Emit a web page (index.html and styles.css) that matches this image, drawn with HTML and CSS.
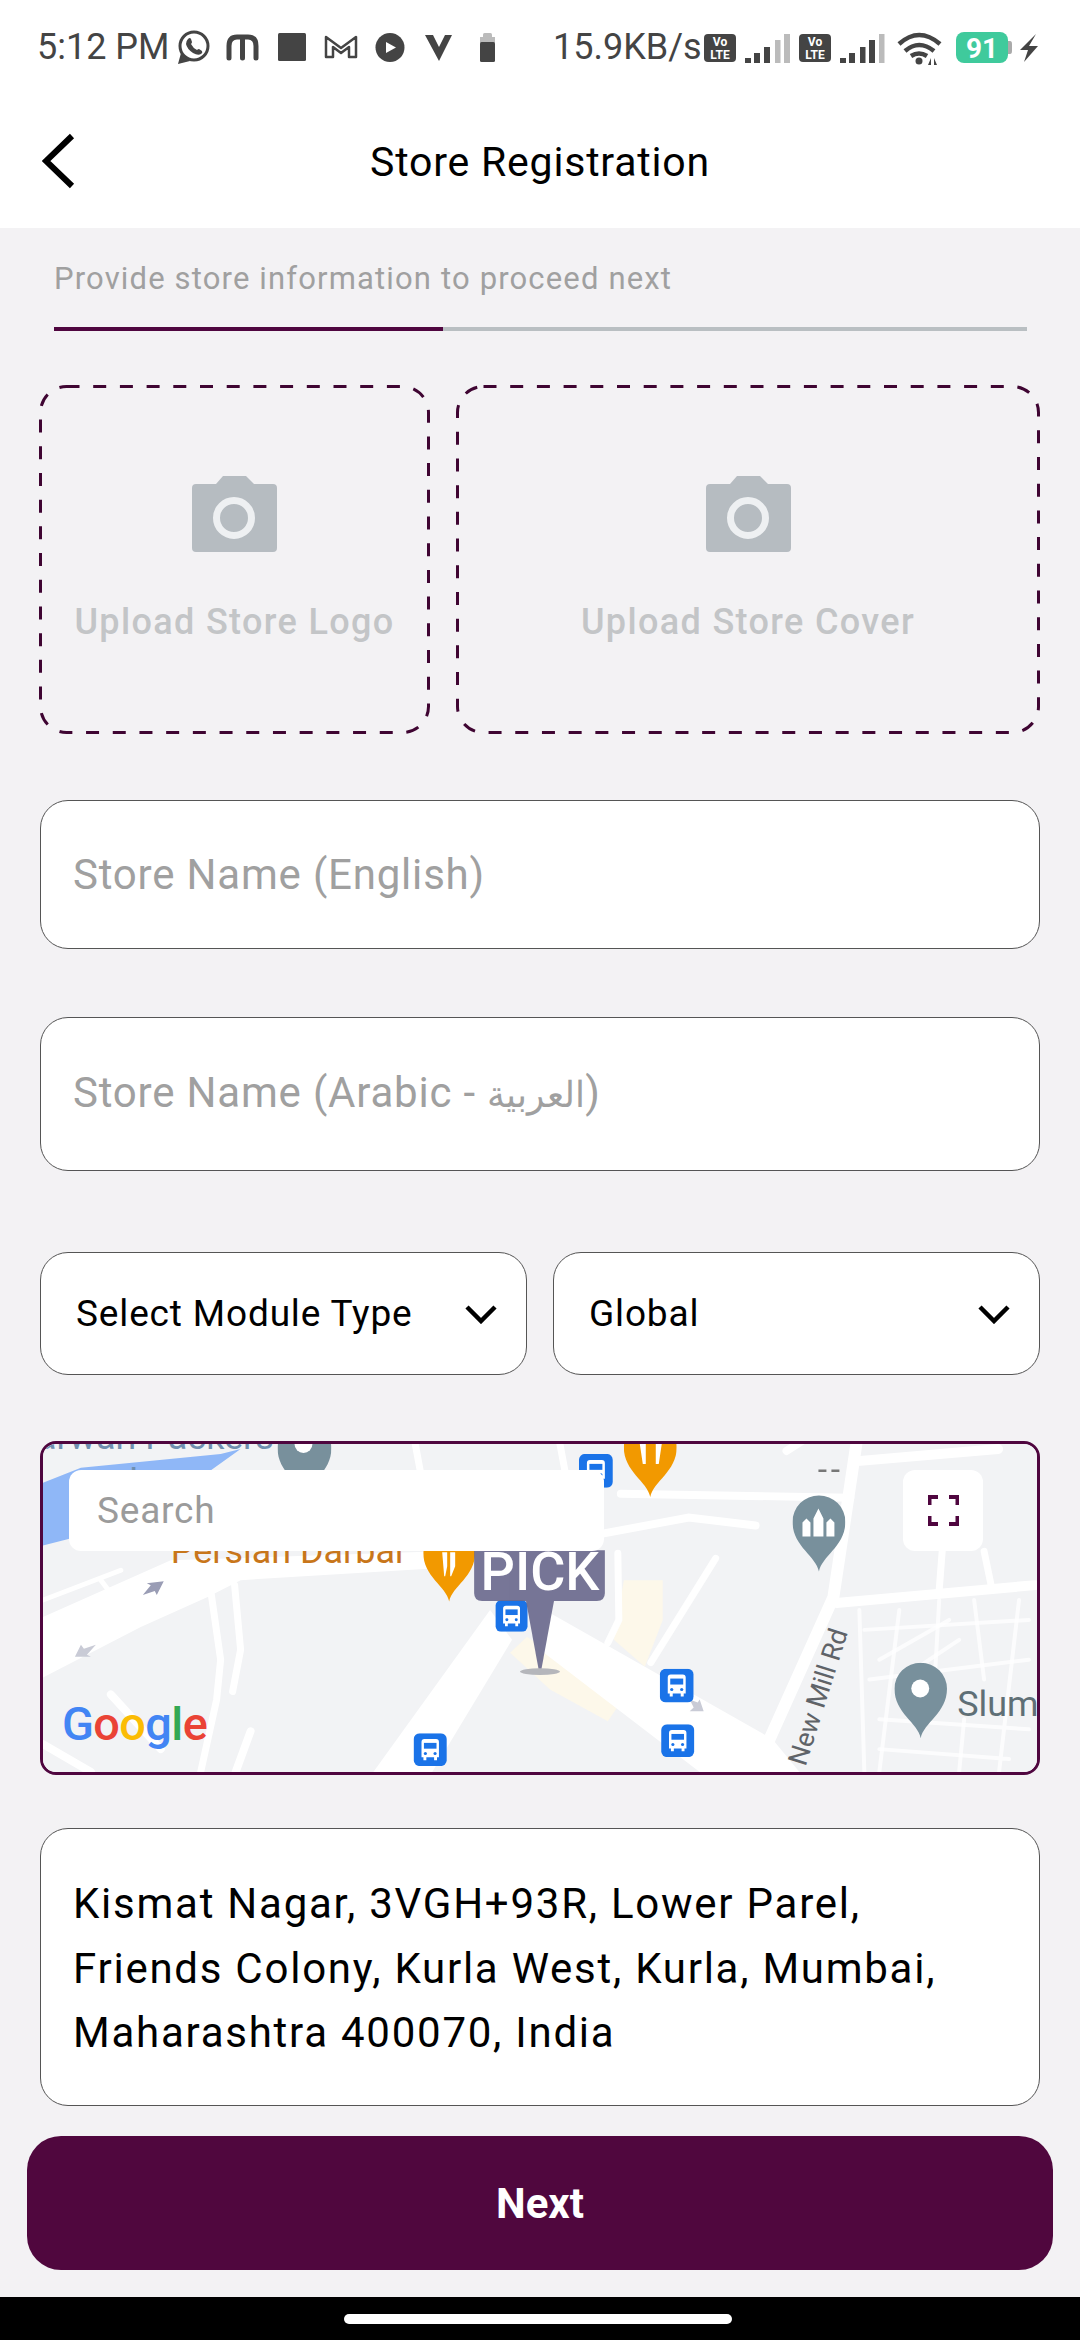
FILE: index.html
```html
<!DOCTYPE html>
<html lang="en">
<head>
    <meta charset="UTF-8">
    <meta name="viewport" content="width=device-width, initial-scale=1.0">
    <title>Store Registration</title>
    <link rel="stylesheet" href="styles.css">
</head>
<body>
    <svg class="defs" width="0" height="0">
        <symbol id="pin" viewBox="0 0 54 78">
            <path d="M27 78C24 62 0 52 0 27A27 27 0 0 1 54 27C54 52 30 62 27 78Z"/>
        </symbol>
        <symbol id="bus" viewBox="0 0 34 34">
            <rect width="34" height="34" rx="6" fill="#1a73e8"/>
            <path d="M8 9q0-3 3-3h12q3 0 3 3v16h-2v3h-3v-3h-8v3h-3v-3H8z" fill="#fff"/>
            <rect x="10.500" y="10" width="13" height="6" fill="#1a73e8"/>
            <circle cx="12" cy="21" r="1.600" fill="#1a73e8"/>
            <circle cx="22" cy="21" r="1.600" fill="#1a73e8"/>
        </symbol>
        <symbol id="camera" viewBox="0 0 85 76">
            <path d="M4 8H24L31 0H54L62 8H81Q85 8 85 12V72Q85 76 81 76H4Q0 76 0 72V12Q0 8 4 8Z" fill="#b6bcc1"/>
            <circle cx="42" cy="42" r="17.500" fill="none" stroke="#eef0f2" stroke-width="7"/>
        </symbol>
        <symbol id="chevron" viewBox="0 0 32 20">
            <path d="M2 3L16 17L30 3" fill="none" stroke="#000" stroke-width="4.500"/>
        </symbol>
    </svg>

    <div class="statusbar">
        <span class="time">5:12 PM</span>
        <svg class="status_left" viewBox="178 28 320 40">
            <circle cx="194" cy="45" r="14" fill="none" stroke="#444" stroke-width="3"/>
            <path d="M181 52L178 63L190 60Z" fill="#444"/>
            <path d="M188 38q2-2 3 0l1 3q0 1-1 2q2 4 6 6q1-1 2-1l3 2q1 2-1 3q-3 2-8-1q-6-4-7-9q0-3 2-5z" fill="#444"/>
            <path d="M229 57V45Q229 36 237 36H248Q256 36 256 45V57M242.500 38V57" fill="none" stroke="#444" stroke-width="5" stroke-linecap="round"/>
            <rect x="278" y="32" width="28" height="28" rx="1.500" fill="#444"/>
            <path d="M326 56V36L341 47L356 36V56H349V46L341 52L333 46V56Z" fill="none" stroke="#444" stroke-width="2.500" stroke-linejoin="round"/>
            <circle cx="390" cy="46.500" r="14.500" fill="#444"/>
            <path d="M386 41L396 46.500L386 52Z" fill="#fff"/>
            <path d="M425 34H433L439 46L445 34H452L439 60Z" fill="#444"/>
            <rect x="483" y="32" width="9" height="8" rx="1.500" fill="#bbb"/>
            <rect x="480" y="36" width="15" height="6" fill="#bbb"/>
            <rect x="480" y="41" width="15" height="20" rx="1.500" fill="#444"/>
        </svg>
        <span class="speed">15.9KB/s</span>
        <svg class="status_right" viewBox="704 28 336 40">
            <rect x="704" y="33" width="32" height="28" rx="4" fill="#444"/>
            <text x="720" y="45" class="volte">Vo</text>
            <text x="720" y="58" class="volte">LTE</text>
            <path d="M745 57h6v5h-6zM754 52h6v10h-6zM764 46h6v16h-6z" fill="#444"/>
            <path d="M775 39h5.500v23H775zM784 33h6v29h-6z" fill="#bbb"/>
            <rect x="799" y="33" width="32" height="28" rx="4" fill="#444"/>
            <text x="815" y="45" class="volte">Vo</text>
            <text x="815" y="58" class="volte">LTE</text>
            <path d="M840 57h6v5h-6zM849 52h6v10h-6zM860 46h5.500v16H860zM869 39h6v23h-6z" fill="#444"/>
            <path d="M879 33h5.500v29H879z" fill="#bbb"/>
            <path d="M899 43Q919 25 940 43M905 50Q919 38 934 50M911 55Q919 50 927 55" fill="none" stroke="#444" stroke-width="4.500"/>
            <circle cx="919" cy="60" r="3.500" fill="#444"/>
            <path d="M931 57v7h-3zM934 57v7h3z" fill="#444"/>
            <rect x="956" y="31" width="52" height="31" rx="8" fill="#3fca9c"/>
            <path d="M1008 40h2q2 0 2 3v7q0 3-2 3h-2z" fill="#aaa"/>
            <text x="982" y="57" class="batt">91</text>
            <path d="M1036 33L1029 45H1038L1024 61L1028 49H1020Z" fill="#444"/>
        </svg>
    </div>

    <header class="appbar">
        <svg class="back" viewBox="0 0 34 56">
            <path d="M30 3L4 28L30 53" fill="none" stroke="#000" stroke-width="6"/>
        </svg>
        <h1>Store Registration</h1>
    </header>

    <main class="form_cnt">
        <p class="hint">Provide store information to proceed next</p>
        <div class="progress"><div class="progress_fill"></div></div>

        <div class="upload_row">
            <div class="upload_box upload_logo">
                <svg class="dash"><rect x="1.500" y="1.500" rx="26"/></svg>
                <svg class="cam"><use href="#camera"/></svg>
                <span>Upload Store Logo</span>
            </div>
            <div class="upload_box upload_cover">
                <svg class="dash"><rect x="1.500" y="1.500" rx="26"/></svg>
                <svg class="cam"><use href="#camera"/></svg>
                <span>Upload Store Cover</span>
            </div>
        </div>

        <div class="field field_en">Store Name (English)</div>
        <div class="field field_ar"><span>Store Name (Arabic - <span class="ar">العربية</span>)</span></div>

        <div class="select_row">
            <div class="select">Select Module Type<svg class="chev"><use href="#chevron"/></svg></div>
            <div class="select">Global<svg class="chev"><use href="#chevron"/></svg></div>
        </div>

        <div class="map_box">
            <svg class="map" viewBox="42 1443 996 330" preserveAspectRatio="none">
                <rect x="42" y="1443" width="996" height="330" fill="#f2f3f5"/>
                <!-- blue area top left -->
                <path d="M42 1482L80 1467L220 1453L240 1448L140 1520L42 1545Z" fill="#8fb7f7"/>
                <!-- buildings -->
                <g fill="#fdf8ea">
                    <path d="M624 1580H663V1620L645 1667L614 1640Z"/>
                    <path d="M510 1653L527 1637L560 1660L618 1707L608 1722L550 1690Z"/>
                </g>
                <!-- wide roads -->
                <g fill="#fff">
                    <path d="M42 1617L170 1560L470 1550V1566L240 1580L207 1597L140 1627L42 1678Z"/>
                    <path d="M373 1773L490 1610L512 1640L432 1773Z"/>
                    <path d="M550 1613L773 1740L800 1773H700L540 1650Z"/>
                </g>
                <!-- small roads -->
                <g fill="none" stroke="#fff" stroke-linecap="round">
                    <path d="M857 1443L834 1597L770 1740L745 1773" stroke-width="12"/>
                    <path d="M861 1460L999 1448" stroke-width="10"/>
                    <path d="M837 1603L1036 1585" stroke-width="10"/>
                    <path d="M621 1493L851 1497" stroke-width="8"/>
                    <path d="M604 1533L689 1517L756 1525" stroke-width="8"/>
                    <path d="M618 1553L619 1620L608 1643" stroke-width="7"/>
                    <path d="M716 1558L651 1663" stroke-width="7"/>
                    <path d="M787 1450L815 1432" stroke-width="8"/>
                    <path d="M943 1551L940 1590M985 1551L992 1585" stroke-width="7"/>
                    <path d="M210 1590L220 1660L216 1700L200 1773" stroke-width="7"/>
                    <path d="M234 1585L240 1650L232 1692" stroke-width="7"/>
                    <path d="M110 1695L160 1750" stroke-width="8"/>
                    <path d="M250 1732L235 1773" stroke-width="8"/>
                    <path d="M42 1745L90 1773" stroke-width="8"/>
                    <path d="M42 1600L120 1570" stroke-width="5"/>
                    <path d="M100 1580L112 1596" stroke-width="5"/>
                    <path d="M415 1443L420 1470M560 1443L565 1470" stroke-width="7"/>
                    <g stroke-width="4" stroke-opacity=".75">
                        <path d="M860 1610L865 1773M865 1630L1030 1620M870 1680L1030 1660"/>
                        <path d="M900 1610L880 1773M940 1600L935 1690M975 1600L985 1680"/>
                        <path d="M1020 1600L1000 1773M880 1720L1030 1730M880 1750L1010 1760"/>
                        <path d="M880 1660L950 1620M900 1680L960 1640M965 1720L960 1773"/>
                    </g>
                </g>
                <!-- arrows -->
                <path d="M142 1595L150 1585L146 1583L163 1581L156 1595L154 1591Z" fill="#9a9db5"/>
                <path d="M95 1645L86 1655L90 1657L74 1657L80 1645L83 1649Z" fill="#c9cbd6"/>
                <path d="M690 1700L698 1703L700 1700L704 1712H690L694 1708Z" fill="#c9cbd6"/>
                <!-- labels -->
                <text x="36" y="1448" class="map_label label_blue">arwari Packers</text>
                <text x="128" y="1491" class="map_label label_blue">Inn</text>
                <text x="170" y="1563" class="map_label label_orange">Persian Darbar</text>
                <text x="958" y="1717" class="map_label label_grey">Slum</text>
                <text transform="translate(806 1768) rotate(-72.600)" class="road_label">New Mill Rd</text>
                <path d="M819 1470h8M832 1470h8" stroke="#777" stroke-width="2.500"/>
                <!-- pins -->
                <use href="#pin" x="277" y="1420" width="54" height="78" fill="#78909c"/>
                <circle cx="303" cy="1443" r="9" fill="#fff"/>
                <use href="#pin" x="423" y="1525" width="52" height="78" fill="#f29900"/>
                <use href="#pin" x="624" y="1419" width="53" height="78" fill="#f29900"/>
                <path d="M442 1552h5v14l-2 10h-1zM455 1552h-5v24h1l4-10zM640 1443h6v20h-3zM662 1443h-6v20h3z" fill="#fff"/>
                <use href="#pin" x="793" y="1494" width="53" height="78" fill="#78909c"/>
                <path d="M803 1536V1522L807 1518L811 1522V1536ZM814 1536V1518L819 1508L824 1518V1536ZM827 1536V1522L831 1518L835 1522V1536Z" fill="#fff"/>
                <use href="#pin" x="895" y="1663" width="53" height="76" fill="#78909c"/>
                <circle cx="921" cy="1689" r="9" fill="#fff"/>
                <!-- bus stops -->
                <use href="#bus" x="495" y="1600" width="33" height="32"/>
                <use href="#bus" x="413" y="1734" width="34" height="33"/>
                <use href="#bus" x="579" y="1453" width="34" height="34"/>
                <use href="#bus" x="660" y="1669" width="34" height="34"/>
                <use href="#bus" x="661" y="1725" width="34" height="33"/>
                <!-- pick marker -->
                <g opacity=".92">
                    <path d="M474 1550H605V1593Q605 1601 597 1601H482Q474 1601 474 1593Z" fill="#6c6b8e"/>
                    <path d="M526 1601H554L541 1672H539Z" fill="#6c6b8e"/>
                </g>
                <ellipse cx="540" cy="1672" rx="20" ry="3.500" fill="#b5b6bb"/>
                <text x="540" y="1590" class="pick">PICK</text>
                <!-- google logo -->
                <text x="61" y="1741" class="google"><tspan fill="#4285f4">G</tspan><tspan fill="#ea4335">o</tspan><tspan fill="#fbbc05">o</tspan><tspan fill="#4285f4">g</tspan><tspan fill="#34a853">l</tspan><tspan fill="#ea4335">e</tspan></text>
            </svg>
            <div class="map_search">Search</div>
            <div class="map_full">
                <svg viewBox="0 0 31 31">
                    <path d="M1.500 10V2H10M21 2H29.500V10M29.500 21V29H21M10 29H1.500V21" fill="none" stroke="#4f063f" stroke-width="4"/>
                </svg>
            </div>
        </div>

        <div class="address">Kismat Nagar, 3VGH+93R, Lower Parel,<br>Friends Colony, Kurla West, Kurla, Mumbai,<br>Maharashtra 400070, India</div>

        <button class="next_btn">Next</button>
    </main>

    <div class="navbar"><div class="home_pill"></div></div>
</body>
</html>
```

FILE: styles.css
```css
* {
    padding: 0;
    margin: 0;
    box-sizing: border-box;
    font-family: Roboto, "Noto Sans", sans-serif;
}
body {
    width: 1080px;
    height: 2340px;
    display: flex;
    flex-direction: column;
    overflow: hidden;
    background: #f3f2f4;
}
.defs {
    display: block;
}
.statusbar {
    height: 80px;
    background: #fff;
    display: flex;
    align-items: center;
    color: #444;
    padding-left: 37px;
    padding-top: 14px;
}
.time, .speed {
    font-size: 36px;
    line-height: 40px;
}
.time {
    width: 141px;
    white-space: nowrap;
}
.status_left {
    width: 320px;
    height: 40px;
    margin-top: 3px;
}
.speed {
    margin-left: 55px;
    width: 151px;
    white-space: nowrap;
}
.status_right {
    width: 336px;
    height: 40px;
    margin-top: 3px;
}
.volte {
    font-size: 12px;
    font-weight: 700;
    fill: #fff;
    text-anchor: middle;
}
.batt {
    font-size: 28px;
    font-weight: 700;
    fill: #fff;
    text-anchor: middle;
}
.appbar {
    height: 148px;
    background: #fff;
    position: relative;
    display: flex;
    align-items: center;
    justify-content: center;
}
.appbar h1 {
    font-size: 41px;
    font-weight: 400;
    letter-spacing: 0.8px;
    color: #000;
    margin-top: 15px;
}
.back {
    position: absolute;
    left: 42px;
    top: 53px;
    width: 34px;
    height: 56px;
}
.form_cnt {
    flex: 1;
    display: flex;
    flex-direction: column;
    padding: 0 40px;
}
.hint {
    margin: 31px 0 0 14px;
    font-size: 31px;
    line-height: 40px;
    letter-spacing: 1.15px;
    color: #a0a0a0;
}
.progress {
    margin: 28px 13px 0 14px;
    height: 4px;
    background: #b9bfc2;
}
.progress_fill {
    width: 389px;
    height: 100%;
    background: #4f063f;
}
.upload_row {
    display: flex;
    gap: 26px;
    margin: 54px 0 0 -1px;
}
.upload_box {
    position: relative;
    height: 349px;
    display: flex;
    flex-direction: column;
    align-items: center;
    justify-content: center;
    gap: 49px;
    color: #c3c5c7;
    font-size: 36px;
    font-weight: 500;
    letter-spacing: 1.35px;
}
.upload_logo {
    width: 391px;
}
.upload_cover {
    flex: 1;
}
.dash {
    position: absolute;
    left: 0;
    top: 0;
    width: 100%;
    height: 100%;
}
.dash rect {
    width: calc(100% - 3px);
    height: calc(100% - 3px);
    fill: none;
    stroke: #3f0532;
    stroke-width: 3;
    stroke-dasharray: 13 13.700;
}
.cam {
    width: 85px;
    height: 76px;
}
.field, .address {
    background: #fff;
    border: 1px solid #555;
    border-radius: 28px;
    font-size: 42px;
    letter-spacing: 0.8px;
    padding-left: 32px;
}
.field {
    display: flex;
    align-items: center;
    color: #a0a0a0;
}
.field_en {
    height: 149px;
    margin-top: 66px;
}
.field_ar {
    height: 154px;
    margin-top: 68px;
    padding-bottom: 4px;
}
.ar {
    font-size: 36px;
    letter-spacing: 0;
}
.select_row {
    display: flex;
    gap: 26px;
    margin-top: 81px;
}
.select {
    flex: 1;
    height: 123px;
    background: #fff;
    border: 1px solid #555;
    border-radius: 28px;
    display: flex;
    align-items: center;
    justify-content: space-between;
    padding: 0 29px 0 35px;
    font-size: 37px;
    letter-spacing: 0.85px;
    color: #000;
}
.chev {
    width: 32px;
    height: 20px;
}
.map_box {
    position: relative;
    height: 334px;
    margin-top: 66px;
    border: 3px solid #4f063f;
    border-radius: 16px;
    overflow: hidden;
}
.map {
    display: block;
    width: 100%;
    height: 100%;
}
.map_label {
    font-size: 36px;
}
.label_blue {
    fill: #6f8fb0;
}
.label_orange {
    fill: #c8761a;
}
.label_grey {
    fill: #5f6f76;
}
.road_label {
    font-size: 27px;
    fill: #5f6368;
}
.pick {
    font-size: 54px;
    font-weight: 500;
    fill: #fff;
    text-anchor: middle;
}
.google {
    font-family: "Open Sans", Roboto, sans-serif;
    font-size: 47px;
    font-weight: 500;
    letter-spacing: -0.6px;
}
.map_search {
    position: absolute;
    left: 26px;
    top: 26px;
    width: 535px;
    height: 81px;
    background: #fff;
    border-radius: 12px;
    display: flex;
    align-items: center;
    padding-left: 28px;
    font-size: 37px;
    letter-spacing: 0.8px;
    color: #9b9b9b;
}
.map_full {
    position: absolute;
    left: 860px;
    top: 26px;
    width: 80px;
    height: 81px;
    background: #fff;
    border-radius: 12px;
    display: flex;
    align-items: center;
    justify-content: center;
}
.map_full svg {
    width: 31px;
    height: 31px;
}
.address {
    height: 278px;
    margin-top: 53px;
    padding: 43px 0 0 32px;
    line-height: 64.500px;
    letter-spacing: 1.75px;
    color: #000;
    white-space: nowrap;
}
.next_btn {
    margin: 30px -13px 0;
    height: 134px;
    border: none;
    border-radius: 34px;
    background: #50073e;
    color: #fff;
    font-size: 42px;
    font-weight: 700;
}
.navbar {
    height: 43px;
    background: #000;
    display: flex;
    justify-content: center;
    padding: 17px 5px 0 0;
}
.home_pill {
    width: 388px;
    height: 10px;
    border-radius: 5px;
    background: #fff;
}
```
